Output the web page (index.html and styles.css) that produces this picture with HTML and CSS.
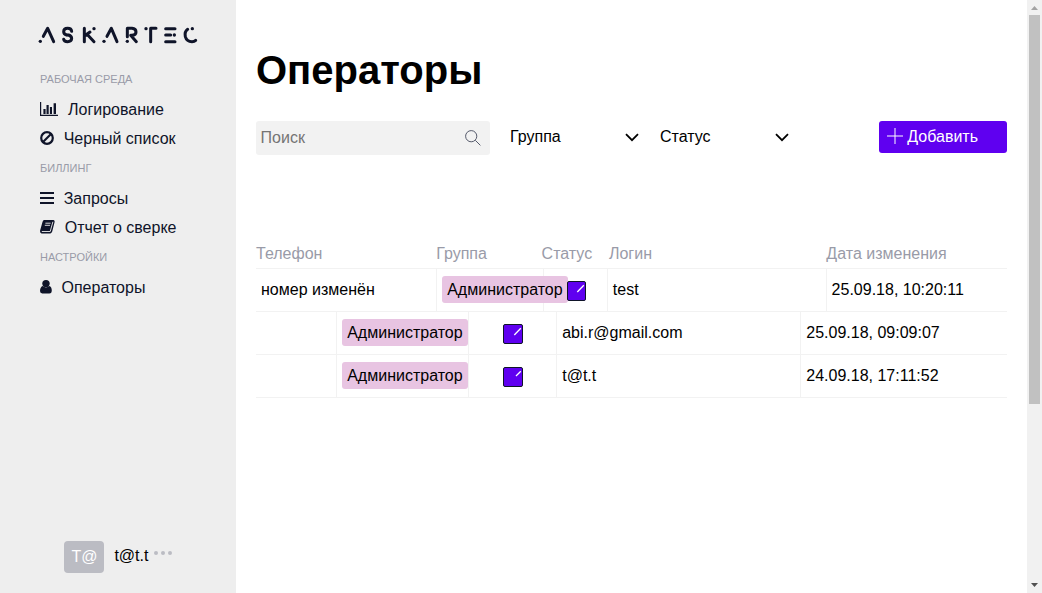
FILE: index.html
```html
<!DOCTYPE html>
<html lang="ru">
<head>
<meta charset="utf-8">
<title>Операторы</title>
<link rel="stylesheet" href="styles.css">
</head>
<body>
<aside class="sidebar">
  <svg class="logo" viewBox="18 27 495 66" role="img" aria-label="Askartec">
    <g class="logo-strokes">
      <path d="M40 64L53 40L71 80"/>
      <path d="M125 49Q124 40 113 40Q101 40 101 50Q101 57 110 60M116 60Q125 63 125 71Q124 80 113 80Q102 80 101 73"/>
      <path d="M163 40V80M180 51L166 61H174L192 80"/>
      <path d="M231 64L244 40L261 80"/>
      <path d="M292 65V40H306Q318 41 318 51Q318 61 306 61H302L319 80"/>
      <path d="M362 40H378M362 40V80"/>
      <path d="M407 41H435M407 60H422M407 80H435"/>
      <path d="M473 43Q463 50 466 65Q470 80 486 80Q493 80 497 76"/>
    </g>
    <g class="logo-dots"><circle cx="31" cy="79" r="5"/><circle cx="113" cy="60" r="4.5"/><circle cx="192" cy="41" r="5"/><circle cx="222" cy="79" r="5"/><circle cx="292" cy="79" r="5"/><circle cx="348" cy="41" r="5"/><circle cx="433" cy="60" r="5"/><circle cx="487" cy="41" r="5"/></g>
  </svg>
  <nav class="nav">
    <h2 class="nav-label">РАБОЧАЯ СРЕДА</h2>
    <a class="nav-link"><svg class="icon icon-chart" viewBox="0 0 18 16"><path d="M0 1H1.2V13.8H18V15H0ZM3.4 8H5.6V13H3.4ZM6.5 4H8.7V13H6.5ZM9.9 6H12V13H9.9ZM13.6 2.2H16V13H13.6Z"/></svg>Логирование</a>
    <a class="nav-link"><svg class="icon icon-ban" viewBox="0 0 14 16"><circle cx="7" cy="8" r="5.8"/><path d="M3 12L11 4"/></svg>Черный список</a>
    <h2 class="nav-label">БИЛЛИНГ</h2>
    <a class="nav-link"><svg class="icon icon-bars" viewBox="0 0 14 16"><path d="M0 1.9H14V4.1H0ZM0 6.9H14V9.1H0ZM0 11.9H14V14.1H0Z"/></svg>Запросы</a>
    <a class="nav-link"><svg class="icon icon-book" viewBox="0 0 15 16"><path d="M4.2 1H13.5Q14.8 1.4 14.6 3L12.2 12.6Q11.7 14.4 10.3 14.4H1.6Q-.2 13.9 .1 11.6L2.5 3Q2.9 1.2 4.2 1Z"/><path class="book-lines" d="M5.4 4.2H10.6M4.8 6.3H10M1.8 12.5H10.2L12.9 2.8"/></svg>Отчет о сверке</a>
    <h2 class="nav-label">НАСТРОЙКИ</h2>
    <a class="nav-link"><svg class="icon icon-user" viewBox="0 0 12 16"><circle cx="6" cy="4.6" r="3.7"/><path d="M2.8 7Q6 9.8 9.2 7Q11.8 7.6 11.8 12Q11.6 14.5 9.4 14.5H2.3Q0 14.2 0 12Q.2 7.8 2.8 7Z"/></svg>Операторы</a>
  </nav>
  <div class="account">
    <span class="avatar">T@</span>
    <span class="account-name">t@t.t</span>
    <span class="more"><i class="dot"></i><i class="dot"></i><i class="dot"></i></span>
  </div>
</aside>
<main class="content">
  <h1 class="title">Операторы</h1>
  <div class="toolbar">
    <label class="search"><input class="search-input" placeholder="Поиск"><svg class="search-icon" viewBox="0 0 16 16"><circle cx="6.2" cy="6.2" r="5.6"/><path d="M10.3 10.3L15.4 15.4"/></svg></label>
    <div class="select">Группа<svg class="chevron" viewBox="0 0 14 9"><path d="M1 1.2L7 7.2L13 1.2"/></svg></div>
    <div class="select">Статус<svg class="chevron" viewBox="0 0 14 9"><path d="M1 1.2L7 7.2L13 1.2"/></svg></div>
    <button class="add"><svg class="plus" viewBox="0 0 16 16"><path d="M8 0V16M0 8H16"/></svg>Добавить</button>
  </div>
  <section class="table">
    <div class="row head"><span>Телефон</span><span>Группа</span><span>Статус</span><span>Логин</span><span>Дата изменения</span></div>
    <div class="row wide">
      <div class="cell">номер изменён</div><div class="cell"><span class="tag">Администратор</span></div>
      <div class="cell status"><span class="check"><svg class="tick" viewBox="0 0 20 20"><path d="M10.3 11L16.8 4.3"/></svg></span></div>
      <div class="cell">test</div><div class="cell">25.09.18, 10:20:11</div>
    </div>
    <div class="row narrow">
      <div class="cell"></div><div class="cell"><span class="tag">Администратор</span></div>
      <div class="cell status"><span class="check"><svg class="tick" viewBox="0 0 20 20"><path d="M11.3 11L17.8 4.3"/></svg></span></div>
      <div class="cell">abi.r@gmail.com</div><div class="cell">25.09.18, 09:09:07</div>
    </div>
    <div class="row narrow">
      <div class="cell"></div><div class="cell"><span class="tag">Администратор</span></div>
      <div class="cell status"><span class="check"><svg class="tick" viewBox="0 0 20 20"><path d="M13 9L17.8 4.2"/></svg></span></div>
      <div class="cell">t@t.t</div><div class="cell">24.09.18, 17:11:52</div>
    </div>
  </section>
</main>
<div class="scrollbar">
  <svg class="arrow" viewBox="0 0 15 15"><path class="arrow-up" d="M4 10L7.5 6L11 10Z"/></svg>
  <div class="thumb"></div>
  <svg class="arrow arrow-bottom" viewBox="0 0 15 15"><path class="arrow-down" d="M4 5L7.5 9L11 5Z"/></svg>
</div>
</body>
</html>
```
FILE: styles.css
```css
* { box-sizing: border-box; }
body {
  margin: 0;
  height: 593px;
  display: flex;
  overflow: hidden;
  background: #fff;
  color: #000;
  font: 16px/18px "Liberation Sans", Arial, sans-serif;
}
.sidebar {
  width: 236px;
  flex: none;
  display: flex;
  flex-direction: column;
  background: #eee;
  color: #0f1429;
}
.logo { width: 165px; height: 22px; margin: 24px 0 0 36px; flex: none; }
.logo-strokes { fill: none; stroke: #0f1429; stroke-width: 9; stroke-linecap: round; stroke-linejoin: round; }
.logo-dots { fill: #0f1429; }
.nav { margin-top: 17px; padding-left: 40px; }
.nav-label {
  margin: 0;
  height: 31px;
  font-size: 11px;
  line-height: 32px;
  font-weight: 400;
  color: #999ba8;
}
.nav-link { display: flex; align-items: center; height: 29px; padding-top: 3px; }
.icon { height: 16px; margin-bottom: 2px; flex: none; fill: #0f1429; }
.icon-chart { width: 18px; margin-right: 10px; }
.icon-ban { width: 14px; margin-right: 9.7px; fill: none; stroke: #0f1429; stroke-width: 2.2; }
.icon-bars { width: 14px; margin-right: 9.7px; }
.icon-book { width: 15px; margin-right: 9.7px; }
.book-lines { fill: none; stroke: #eee; stroke-width: .9; }
.icon-user { width: 12px; margin-right: 9.5px; }
.account { display: flex; margin: auto 0 20px 64px; height: 32px; color: #000; }
.avatar {
  width: 40px;
  height: 32px;
  padding-left: 1px;
  border-radius: 4px;
  background: #bbbcc3;
  color: #fff;
  text-align: center;
  line-height: 32px;
}
.account-name { margin-left: 10.4px; line-height: 30px; }
.more { display: flex; gap: 3px; margin: 10px 0 0 5.6px; }
.dot { width: 4px; height: 4px; border-radius: 50%; background: #bbbcc3; }
.content { flex: 1; padding: 47px 20px 0; }
.title { margin: 0; font-size: 40px; line-height: 46px; }
.toolbar { display: flex; align-items: flex-start; margin-top: 28px; height: 34px; }
.search {
  display: flex;
  align-items: center;
  width: 234px;
  height: 34px;
  padding: 0 9px 0 4.6px;
  border-radius: 3px;
  background: #f2f2f2;
}
.search-input {
  flex: 1;
  min-width: 0;
  padding: 0;
  border: 0;
  background: none;
  font: inherit;
}
.search-input::placeholder { color: #757575; }
.search-icon { width: 16px; height: 16px; fill: none; stroke: #565b6c; stroke-width: 1; }
.select {
  display: flex;
  align-items: center;
  justify-content: space-between;
  width: 130px;
  height: 31px;
  margin-left: 20px;
  padding-right: 1px;
}
.chevron { width: 14px; height: 9px; margin-top: 1px; fill: none; stroke: #000; stroke-width: 1.8; }
.add {
  display: flex;
  align-items: center;
  width: 128px;
  height: 32px;
  margin-left: auto;
  padding: 0 0 0 8px;
  border: 0;
  border-radius: 3px;
  background: #5f00f0;
  color: #fff;
  font: inherit;
}
.plus { width: 16px; height: 16px; margin: -2px 4.3px 0 0; stroke: #fff; stroke-width: 1; }
.table { margin-top: 85px; }
.row { display: grid; height: 43px; border-bottom: 1px solid #f2f2f2; }
.head { height: 29px; line-height: 28px; color: #999ba8; grid-template-columns: 180.2px 105.4px 67.4px 217.4px 1fr; }
.wide { grid-template-columns: 180px 107px 63.8px 218.8px 1fr; }
.narrow { grid-template-columns: 80px 132px 88.2px 244.1px 1fr; }
.cell { display: flex; align-items: center; min-width: 0; padding-left: 5px; border-left: 1px solid #f2f2f2; }
.cell:first-child { border-left: 0; }
.tag {
  position: relative;
  flex: none;
  width: 126px;
  height: 27px;
  margin-bottom: 1px;
  padding: 0 0 0 5.2px;
  border-radius: 3px;
  background: #e8c4e2;
  line-height: 28px;
}
.status { justify-content: center; padding: 2px 0 0; }
.wide .status { justify-content: flex-start; padding-left: 23px; }
.check { position: relative; flex: none; width: 20px; height: 20px; border: 1px solid #0f1429; border-radius: 2px; background: #5f00f0; }
.wide .check { width: 19px; }
.tick { display: block; width: 20px; height: 20px; margin: -1px; stroke: #fff; stroke-width: 1.3; }
.scrollbar { display: flex; flex-direction: column; width: 15px; flex: none; background: #f1f1f1; }
.arrow { width: 15px; height: 15px; flex: none; }
.arrow-up { fill: #a3a3a3; }
.arrow-down { fill: #505050; }
.thumb { height: 389px; margin: 0 2px; background: #c1c1c1; }
.arrow-bottom { margin-top: auto; }
```
